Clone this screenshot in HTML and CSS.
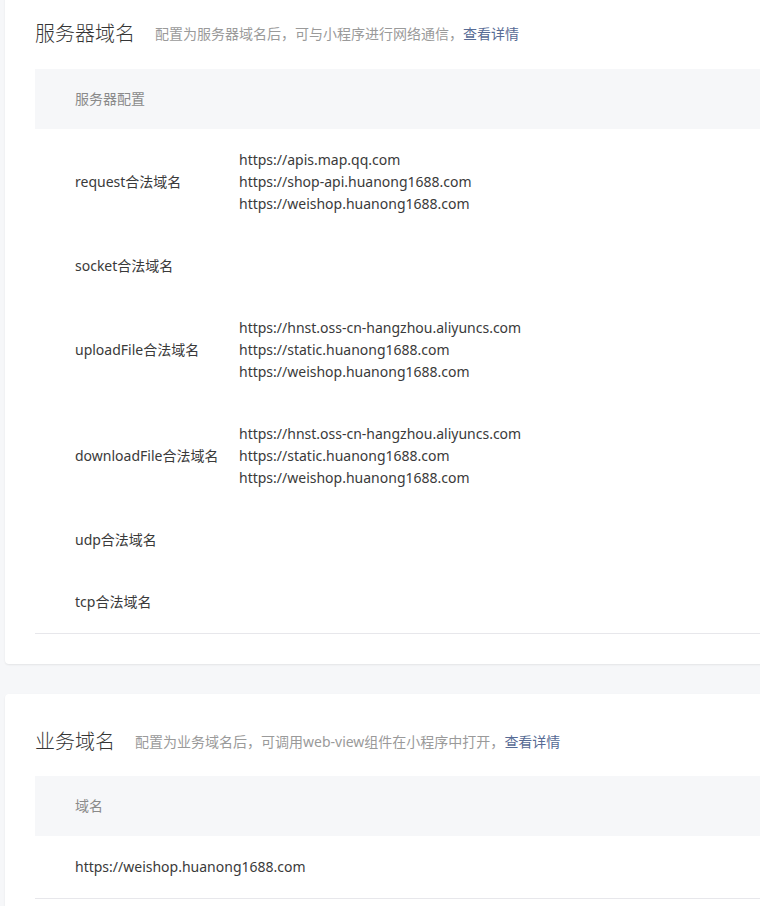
FILE: index.html
```html
<!DOCTYPE html>
<html lang="zh-CN">
<head>
<meta charset="utf-8">
<title>开发设置</title>
<link rel="stylesheet" href="styles.css">
</head>
<body>
<div class="page">
  <section class="card first">
    <div class="card-head">
      <h2 class="title">服务器域名</h2>
      <p class="desc">配置为服务器域名后，可与小程序进行网络通信，<a class="link" href="#">查看详情</a></p>
    </div>
    <div class="table">
      <div class="thead">服务器配置</div>
      <div class="row">
        <div class="label">request合法域名</div>
        <div class="values">
          <div>https://apis.map.qq.com</div>
          <div>https://shop-api.huanong1688.com</div>
          <div>https://weishop.huanong1688.com</div>
        </div>
      </div>
      <div class="row">
        <div class="label">socket合法域名</div>
        <div class="values"></div>
      </div>
      <div class="row">
        <div class="label">uploadFile合法域名</div>
        <div class="values">
          <div>https://hnst.oss-cn-hangzhou.aliyuncs.com</div>
          <div>https://static.huanong1688.com</div>
          <div>https://weishop.huanong1688.com</div>
        </div>
      </div>
      <div class="row">
        <div class="label">downloadFile合法域名</div>
        <div class="values">
          <div>https://hnst.oss-cn-hangzhou.aliyuncs.com</div>
          <div>https://static.huanong1688.com</div>
          <div>https://weishop.huanong1688.com</div>
        </div>
      </div>
      <div class="row">
        <div class="label">udp合法域名</div>
        <div class="values"></div>
      </div>
      <div class="row last">
        <div class="label">tcp合法域名</div>
        <div class="values"></div>
      </div>
    </div>
  </section>

  <section class="card second">
    <div class="card-head">
      <h2 class="title">业务域名</h2>
      <p class="desc">配置为业务域名后，可调用web-view组件在小程序中打开，<a class="link" href="#">查看详情</a></p>
    </div>
    <div class="table">
      <div class="thead">域名</div>
      <div class="row last">
        <div class="single">https://weishop.huanong1688.com</div>
      </div>
    </div>
  </section>
</div>
</body>
</html>
```

FILE: styles.css
```css
html, body {
  margin: 0;
  padding: 0;
  background: #f6f7f9;
  overflow: hidden;
}
body {
  font-family: "Noto Sans", "Noto Sans CJK SC", sans-serif;
  color: #3a3a3a;
  font-size: 14px;
}
.page {
  margin-top: -14px;
  padding-left: 5px;
  width: 1200px;
}
.card {
  background: #fff;
  border-radius: 4px;
  box-shadow: 0 1px 2px rgba(0, 0, 0, 0.08);
  padding: 32px 30px 30px;
  margin-bottom: 30px;
}
.card-head {
  display: flex;
  align-items: center;
  height: 32px;
  margin-bottom: 19px;
}
.second .card-head {
  margin-bottom: 18px;
}
.title {
  margin: 0;
  font-size: 20px;
  font-weight: 300;
  color: #353535;
  line-height: 32px;
}
.desc {
  margin: 0 0 0 20px;
  font-size: 14px;
  color: #9a9a9a;
  line-height: 32px;
}
.link {
  color: #576b95;
  text-decoration: none;
}
.thead {
  background: #f6f7f9;
  height: 60px;
  line-height: 60px;
  padding-left: 40px;
  color: #8a8a8a;
  font-size: 14px;
}
.row {
  display: flex;
  align-items: center;
  padding: 20px 0;
  line-height: 22px;
  min-height: 22px;
}
.row.last {
  border-bottom: 1px solid #e7e7eb;
}
.label {
  width: 164px;
  padding-left: 40px;
  flex: none;
}
.single {
  padding-left: 40px;
}
```
